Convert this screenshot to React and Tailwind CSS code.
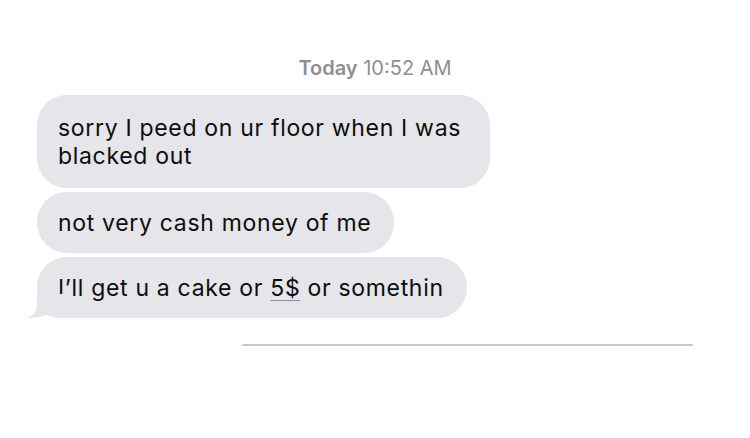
export default function App() {
  return (
    <div className="w-[750px] h-[438px] bg-white overflow-hidden font-['Inter',_'Liberation_Sans',_sans-serif]">
      {/* Timestamp */}
      <div className="pt-[56px] text-center text-[20px] leading-[24px] text-[#8e8e93]">
        <span className="font-semibold">Today</span> 10:52 AM
      </div>

      {/* Messages */}
      <div className="mt-[15px] pl-[37px] flex flex-col items-start gap-[4px] text-[23px] leading-[28px] tracking-[0.68px] text-[#0d0d0d]">
        <div className="w-[453px] rounded-[30px] bg-[#e5e5ea] pl-[21px] pr-[20px] py-[18.5px]">
          sorry I peed on ur floor when I was blacked out
        </div>
        <div className="rounded-[30px] bg-[#e5e5ea] pl-[21px] pr-[23px] py-[16.5px]">
          not very cash money of me
        </div>
        <div className="relative rounded-[30px] bg-[#e5e5ea] pl-[21px] pr-[23px] py-[16.5px]">
          I’ll get u a cake or{' '}
          <span className="underline decoration-[#8e8e93] decoration-1 underline-offset-[4px]">5$</span> or somethin
          <svg className="absolute left-[-10px] bottom-0" width="36" height="24" viewBox="0 0 36 24">
            <path d="M10 0 L10 11 C10 18 5 22 0 24 C7 24.5 14 23 19 20.5 C24 23 29 24 36 24 L36 0 Z" fill="#e5e5ea" />
          </svg>
        </div>
      </div>

      {/* Divider */}
      <div className="mt-[26px] ml-[242px] w-[451px] h-[2px] bg-[#c8c8cc] rounded-full" />
    </div>
  );
}
